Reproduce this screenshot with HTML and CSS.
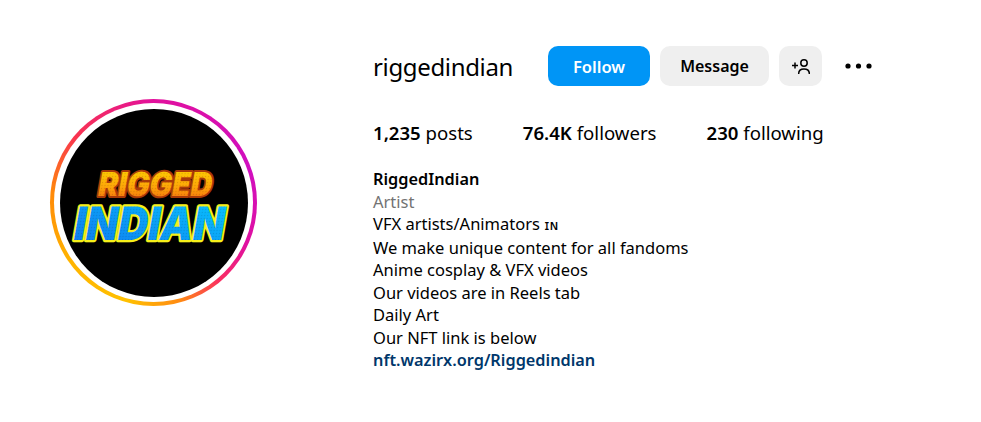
FILE: index.html
```html
<!DOCTYPE html>
<html lang="en">
<head>
	<meta charset="UTF-8" />
	<meta name="viewport" content="width=device-width, initial-scale=1.0" />
	<title>riggedindian</title>
	<link rel="stylesheet" href="styles.css">
</head>
<body>
	<main class="profile">
		<div class="avatar-col">
			<div class="ring">
				<div class="ring-gap">
					<svg class="avatar" viewBox="0 0 188 188" aria-label="RiggedIndian logo">
						<defs>
							<linearGradient id="orange" x1="0" y1="0" x2="0" y2="1">
								<stop offset="0" stop-color="#ffd800" />
								<stop offset=".55" stop-color="#ffa808" />
								<stop offset="1" stop-color="#f4640f" />
							</linearGradient>
							<linearGradient id="blue" x1="1" y1="0" x2="0" y2="1">
								<stop offset="0" stop-color="#08c8ff" />
								<stop offset="1" stop-color="#0f76f0" />
							</linearGradient>
							<pattern id="dots" width="3" height="3" patternUnits="userSpaceOnUse">
								<circle cx="1.5" cy="1.5" r=".7" fill="#000" fill-opacity=".14" />
							</pattern>
						</defs>
						<circle cx="94" cy="94" r="94" fill="#000" />
						<g transform="translate(15 0) skewX(-10)">
							<text class="logo-top logo-line" x="37" y="87" textLength="114" lengthAdjust="spacingAndGlyphs">RIGGED</text>
							<text class="logo-top" x="37" y="87" textLength="114" lengthAdjust="spacingAndGlyphs" fill="url(#orange)">RIGGED</text>
							<text class="logo-top logo-dots" x="37" y="87" textLength="114" lengthAdjust="spacingAndGlyphs" fill="url(#dots)">RIGGED</text>
							<text class="logo-bottom logo-line" x="20" y="131" textLength="151" lengthAdjust="spacingAndGlyphs">INDIAN</text>
							<text class="logo-bottom" x="20" y="131" textLength="151" lengthAdjust="spacingAndGlyphs" fill="url(#blue)">INDIAN</text>
							<text class="logo-bottom logo-dots" x="20" y="131" textLength="151" lengthAdjust="spacingAndGlyphs" fill="url(#dots)">INDIAN</text>
						</g>
					</svg>
				</div>
			</div>
		</div>
		<section class="info">
			<div class="top-row">
				<h1 class="username">riggedindian</h1>
				<div class="actions">
					<button class="btn btn-follow">Follow</button>
					<button class="btn btn-message">Message</button>
					<button class="btn btn-add" aria-label="Suggested accounts">
						<svg width="18" height="15" viewBox="0 0 18 15" fill="none" stroke="#000" stroke-width="1.5">
							<path d="M0 6.5h6M3 3.5v6" />
							<circle cx="12" cy="4" r="3.2" />
							<path d="M6.7 14.5c0-3.2 2.2-4.6 5.3-4.6s5.3 1.4 5.3 4.6" stroke-linecap="round" />
						</svg>
					</button>
				</div>
				<svg class="more" width="27" height="6" viewBox="0 0 27 6" fill="#000">
					<circle cx="3" cy="3" r="2.6" />
					<circle cx="13.5" cy="3" r="2.6" />
					<circle cx="24" cy="3" r="2.6" />
				</svg>
			</div>
			<ul class="stats">
				<li><b>1,235</b> posts</li>
				<li><b>76.4K</b> followers</li>
				<li><b>230</b> following</li>
			</ul>
			<div class="bio">
				<div class="bio-name">RiggedIndian</div>
				<div class="bio-cat">Artist</div>
				<div>VFX artists/Animators <span class="small-caps">ɪɴ</span></div>
				<div>We make unique content for all fandoms</div>
				<div>Anime cosplay &amp; VFX videos</div>
				<div>Our videos are in Reels tab</div>
				<div>Daily Art</div>
				<div>Our NFT link is below</div>
				<a class="bio-link" href="#">nft.wazirx.org/Riggedindian</a>
			</div>
		</section>
	</main>
</body>
</html>
```

FILE: styles.css
```css
* {
	padding: 0;
	margin: 0;
	box-sizing: border-box;
}

body {
	font-family: "Noto Sans", "Open Sans", sans-serif;
	color: #000;
	background-color: #fff;
}

.profile {
	display: flex;
	padding: 46px 0 0 50px;
}

/* avatar start */
.avatar-col {
	width: 323px;
	flex-shrink: 0;
	padding-top: 53px;
}

.ring {
	width: 207px;
	height: 207px;
	padding: 4px;
	border-radius: 50%;
	background: conic-gradient(from 0deg, #e2109c 0deg, #d00fc0 70deg, #e0109f 115deg, #fa2f60 140deg, #ff8a12 165deg, #ffc000 195deg, #ffb400 235deg, #ff8a08 275deg, #f9344f 310deg, #e2109c 360deg);
}

.ring-gap {
	display: flex;
	justify-content: center;
	align-items: center;
	width: 100%;
	height: 100%;
	border-radius: 50%;
	background-color: #fff;
}

.avatar {
	display: block;
	width: 188px;
	height: 188px;
}

.logo-top,
.logo-bottom {
	font-family: "Inter", "DejaVu Sans", sans-serif;
	font-weight: 900;
	stroke-linejoin: round;
}

.logo-top {
	font-size: 33px;
}

.logo-bottom {
	font-size: 46px;
}

.logo-top.logo-line {
	stroke: #a83a08;
	stroke-width: 4px;
}

.logo-bottom.logo-line {
	stroke: #f6f01a;
	stroke-width: 4.5px;
}

.logo-dots {
	stroke: none;
}
/* avatar end */

.top-row {
	display: flex;
	align-items: center;
	height: 40px;
}

.username {
	width: 175px;
	font-size: 24px;
	font-weight: 400;
	letter-spacing: -.35px;
}

.actions {
	display: flex;
	gap: 10px;
}

.btn {
	display: flex;
	justify-content: center;
	align-items: center;
	height: 40px;
	border: 0;
	border-radius: 10px;
	font-family: inherit;
	font-size: 16px;
	font-weight: 600;
	background-color: #efefef;
	color: #000;
}

.btn-follow {
	width: 102px;
	font-size: 16.6px;
	color: #fff;
	background-color: #0095f6;
}

.btn-message {
	width: 109px;
}

.btn-add {
	width: 43px;
}

.more {
	margin-left: 23px;
}

.stats {
	display: flex;
	gap: 50px;
	margin-top: 34px;
	font-size: 18.6px;
	line-height: 26px;
	list-style: none;
}

.stats b {
	font-weight: 600;
}

.bio {
	margin-top: 22px;
	font-size: 16.5px;
	line-height: 22.5px;
}

.bio-name {
	font-size: 16.3px;
	font-weight: 600;
}

.bio-cat {
	color: #737373;
}

.small-caps {
	font-size: 14px;
	font-family: "DejaVu Sans", sans-serif;
}

.bio-link {
	display: block;
	font-size: 16.3px;
	font-weight: 600;
	color: #00376b;
	text-decoration: none;
}
```
